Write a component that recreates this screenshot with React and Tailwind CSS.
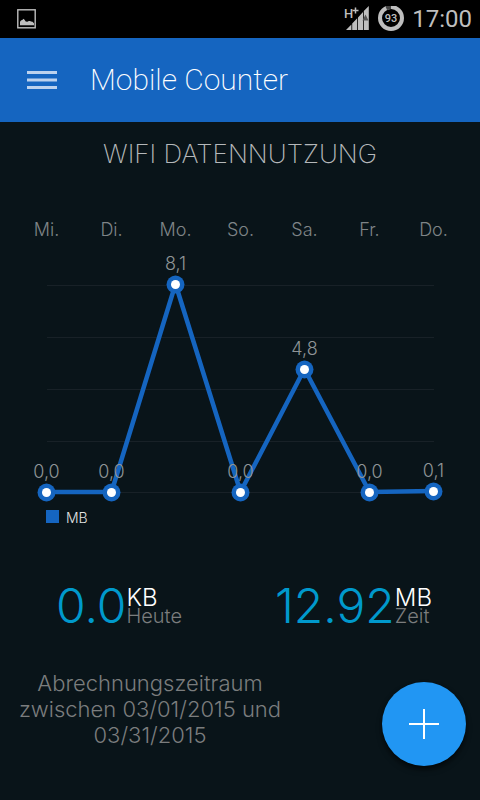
const points = [
    { day: "Mi.", label: "0,0", x: 46, y: 492 },
    { day: "Di.", label: "0,0", x: 111, y: 492 },
    { day: "Mo.", label: "8,1", x: 175, y: 284 },
    { day: "So.", label: "0,0", x: 240, y: 492 },
    { day: "Sa.", label: "4,8", x: 304, y: 369 },
    { day: "Fr.", label: "0,0", x: 369, y: 492 },
    { day: "Do.", label: "0,1", x: 433, y: 491 },
];

const gridLines = [285, 337, 389, 441, 492];

const StatusBar = () => (
    <div className="flex h-[38px] items-center justify-between bg-black pl-4 pr-2">
        <svg viewBox="0 0 20 20" className="h-5 w-5" aria-label="Screenshot">
            <rect x="1.8" y="0.8" width="17.4" height="18" fill="none" stroke="#bebebe" strokeWidth="1.4" />
            <path d="M4 16.3v-3.6l1-1.3 1.6-.6.9-1 1 1 1.2 1.6 1.6.3 1.6-.7 1.1-.1 1 .5 1.5.4 1.5 1.4v2.1z" fill="#bebebe" />
        </svg>
        <div className="flex items-center gap-2">
            <svg viewBox="0 0 26 26" className="h-[26px] w-[26px]" aria-label="Signal">
                <text x="0" y="12" fill="#bebebe" className="font-['Roboto',sans-serif] text-[13px] font-medium">H</text>
                <path d="M11.5 1.5v6M8.5 4.5h6" stroke="#bebebe" strokeWidth="1.5" />
                <path d="M2 24l5.4-5.4V24zM8.2 17.5l5-5.2V24h-5zM14 11.5l5-5.5v18h-5zM19.8 5l5-5v24h-5z" fill="#bebebe" />
                <path d="M18.5 14.5l3-6 3 6z" fill="#555" />
            </svg>
            <svg viewBox="0 0 26 26" className="h-[26px] w-[26px]" aria-label="Battery">
                <circle cx="13" cy="12" r="11" fill="none" stroke="#bebebe" strokeWidth="4" />
                <path d="M8.2 2.1A11 11 0 0 1 13 1" fill="none" stroke="#444" strokeWidth="4" />
                <text x="13" y="16" textAnchor="middle" fill="#bebebe" className="font-['Roboto',sans-serif] text-[11px] font-medium">93</text>
            </svg>
            <span className="font-['Roboto',sans-serif] text-2xl text-[#bebebe]">17:00</span>
        </div>
    </div>
);

const Chart = () => (
    <svg viewBox="0 210 480 324" className="w-full" role="img" aria-label="WIFI Datennutzung">
        {gridLines.map((y) => (
            <path key={y} d={`M47 ${y + 0.5}H434`} stroke="#182127" strokeWidth="1" />
        ))}
        <polyline
            points={points.map((p) => `${p.x + 0.5},${p.y}`).join(" ")}
            fill="none"
            stroke="#1565c0"
            strokeWidth="4.5"
            strokeLinejoin="round"
        />
        {points.map((p) => (
            <g key={p.day}>
                <circle cx={p.x + 0.5} cy={p.y + 0.5} r="9" fill="#1565c0" />
                <circle cx={p.x + 0.5} cy={p.y + 0.5} r="4.5" fill="#fff" />
                <text x={p.x + 0.5} y={p.y - 14} textAnchor="middle" fill="#8f9497" className="text-lg font-light">{p.label}</text>
                <text x={p.x + 0.5} y="236" textAnchor="middle" fill="#7f8487" className="text-lg font-light">{p.day}</text>
            </g>
        ))}
        <rect x="46" y="510" width="13" height="13" fill="#1565c0" />
        <text x="66" y="523" fill="#e4e4e4" className="text-sm font-light">MB</text>
    </svg>
);

const Stat = ({ value, unit, label }) => (
    <div className="flex items-center">
        <span className="text-5xl font-light text-[#0099cc]">{value}</span>
        <div className="flex flex-col">
            <span className="text-2xl leading-5 font-light text-white">{unit}</span>
            <span className="text-xl leading-4 font-light text-[#7b7d7e]">{label}</span>
        </div>
    </div>
);

const App = () => {
    return (
        <div className="flex min-h-screen flex-col bg-[#091419] font-['Inter',sans-serif]">
            <StatusBar />
            <header className="flex h-[84px] items-center gap-[30px] bg-[#1565c0] px-6">
                <button type="button" aria-label="Menu" className="h-9 w-9">
                    <svg viewBox="0 0 36 36" className="h-9 w-9">
                        <path d="M3 10.5h30M3 18h30M3 25.5h30" stroke="#bcd2ee" strokeWidth="3" />
                    </svg>
                </button>
                <h1 className="font-['Roboto',sans-serif] text-3xl font-extralight text-white">Mobile Counter</h1>
            </header>
            <main>
                <h2 className="pt-4 pb-10 text-center text-[26px] leading-8 font-extralight text-[#b5b8ba]">WIFI DATENNUTZUNG</h2>
                <Chart />
                <div className="mt-12 flex justify-between pr-12 pl-14">
                    <Stat value="0.0" unit="KB" label="Heute" />
                    <Stat value="12.92" unit="MB" label="Zeit" />
                </div>
                <div className="mt-10 flex items-start justify-between pr-[14px] pl-3">
                    <p className="w-[276px] text-center text-[22px] leading-[26px] font-light text-[#7b7d7e]">
                        Abrechnungszeitraum zwischen 03/01/2015 und 03/31/2015
                    </p>
                    <button
                        type="button"
                        aria-label="Add"
                        className="mt-3 flex h-[84px] w-[84px] items-center justify-center rounded-full bg-[#2196f3] shadow-md shadow-black/60"
                    >
                        <svg viewBox="0 0 30 30" className="h-[30px] w-[30px]">
                            <path d="M15 0v30M0 15h30" stroke="#fff" strokeWidth="2" />
                        </svg>
                    </button>
                </div>
            </main>
        </div>
    );
};

export default App;
